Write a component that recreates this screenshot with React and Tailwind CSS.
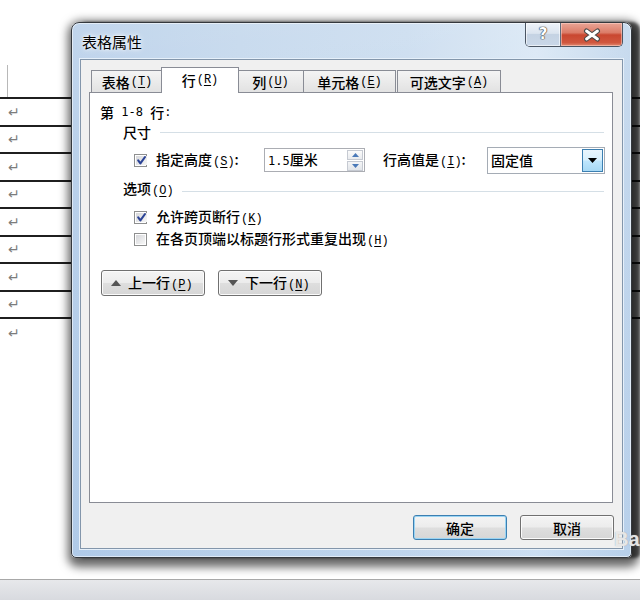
import React from "react";

function Mn({ k }) {
  return (
    <span className="font-['Liberation_Mono',monospace] text-[12px] ml-[1px]">
      (<span className="underline underline-offset-[2px]">{k}</span>)
    </span>
  );
}

function Lat({ children }) {
  return <span className="font-['DejaVu_Sans_Mono',monospace] text-[12px] whitespace-pre">{children}</span>;
}

function Ret() {
  return <span className="font-['DejaVu_Sans',sans-serif] text-[14px] leading-none text-[#7c7c7c]">↵</span>;
}

function Check({ checked }) {
  return (
    <span className="w-[13px] h-[13px] shrink-0 border border-[#8e8f8f] bg-white p-px flex">
      <span className="flex-1 bg-[linear-gradient(135deg,#d6d7da,#f7f7f7)] flex items-center justify-center">
        {checked && (
          <svg width="11" height="11" viewBox="0 0 11 11">
            <path d="M2.2 5.4 L4.4 8.4 L9 2" fill="none" stroke="#2b4396" strokeWidth="2.1" strokeLinecap="round" strokeLinejoin="round" />
          </svg>
        )}
      </span>
    </span>
  );
}

function Btn({ children, def, className }) {
  return (
    <div
      className={
        "h-[25px] rounded-[3px] border flex items-center bg-[linear-gradient(#f4f4f4_0%,#ececec_48%,#dedede_52%,#d6d6d6_100%)] " +
        (def
          ? "border-[#3c7fb1] shadow-[inset_0_0_0_1px_#9ad4f3] "
          : "border-[#707070] shadow-[inset_0_0_0_1px_#fbfbfb] ") +
        (className || "")
      }
    >
      {children}
    </div>
  );
}

export default function App() {
  const rows = Array.from({ length: 8 });
  return (
    <div className="relative w-[640px] h-[600px] overflow-hidden bg-white flex flex-col font-['Noto_Sans_CJK_SC',sans-serif] text-black">
      {/* background document */}
      <div className="flex-1 flex flex-col">
        <div className="h-[65px] shrink-0" />
        <div className="ml-[7px] w-px h-[32px] shrink-0 bg-[#b8b8b8]" />
        <div className="border-t-2 border-[#1f1f1f]">
          {rows.map((_, i) => (
            <div key={i} className="h-[27.5px] border-b-2 border-[#1f1f1f] flex items-center pl-[8px]">
              <Ret />
            </div>
          ))}
        </div>
        <div className="h-[28px] flex items-center pl-[8px]">
          <Ret />
        </div>
      </div>
      <div className="h-[21px] shrink-0 border-t border-[#a8a8a8] bg-[linear-gradient(#e7e8eb,#d8dadf)]" />

      {/* dialog window */}
      <div className="absolute left-[71px] top-[22px] w-[561px] h-[536px] rounded-t-[8px] rounded-b-[5px] border border-[#34383d] flex flex-col bg-[linear-gradient(180deg,rgba(255,255,255,0.12),rgba(255,255,255,0)_30%,rgba(110,160,220,0.12)),linear-gradient(90deg,#b9d0ea_0%,#c3d7ec_30%,#cadcef_60%,#d9e7f5_83%,#c1d6ec_100%)] shadow-[2px_4px_10px_5px_rgba(0,0,0,0.6),8px_0_3px_rgba(0,0,0,0.6),inset_0_0_0_1px_rgba(255,255,255,0.55)]">
        {/* title bar */}
        <div className="h-[36px] shrink-0 flex justify-between">
          <div className="self-center pl-[10px] pt-[1px] text-[15px] leading-[18px] [text-shadow:0_0_6px_#ffffff,0_0_3px_#ffffff]">
            表格属性
          </div>
          <div className="flex mr-[8px] h-[24px] rounded-b-[5px] overflow-hidden border border-t-0 border-[#4a5563]">
            <div className="w-[35px] h-full flex items-center justify-center border-r border-[#5d6b7c] bg-[linear-gradient(#eef3f9_0%,#dbe4ef_45%,#c5d3e3_50%,#c9d7e8_100%)] shadow-[inset_0_0_0_1px_rgba(255,255,255,0.6)]">
              <span className="font-['DejaVu_Sans',sans-serif] font-bold text-[15px] leading-none text-white [text-shadow:0_0_1px_#333,0_0_1px_#333,0_0_1px_#333]">
                ?
              </span>
            </div>
            <div className="w-[61px] h-full flex items-center justify-center bg-[linear-gradient(#e9a596_0%,#db7c68_42%,#c94730_52%,#d0573f_85%,#e08a72_100%)] shadow-[inset_0_0_0_1px_rgba(255,220,210,0.5)]">
              <svg width="18" height="14" viewBox="0 0 18 14">
                <path d="M3.5 3 L14.5 11 M14.5 3 L3.5 11" stroke="#4a4a4a" strokeWidth="5" strokeLinecap="round" />
                <path d="M3.5 3 L14.5 11 M14.5 3 L3.5 11" stroke="#ffffff" strokeWidth="2.8" strokeLinecap="round" />
              </svg>
            </div>
          </div>
        </div>

        {/* client area */}
        <div className="flex-1 mx-[8px] mb-[8px] border border-[#8396ab] shadow-[0_0_0_1px_#e6f0fa] bg-[#f0f0f0] flex flex-col text-[14px] leading-[18px] font-medium">
          {/* tabs */}
          <div className="mt-[7px] h-[25px] pl-[10px] flex items-end shrink-0">
            <div className="w-[72px] h-[22px] border border-b-0 border-[#898c95] bg-[linear-gradient(#f4f4f4,#e2e2e2)] flex items-center justify-center">
              表格<Mn k="T" />
            </div>
            <div className="relative z-10 -ml-[2px] w-[78px] h-[26px] -mb-px border border-b-0 border-[#898c95] bg-white flex items-center justify-center pb-[1px]">
              行<Mn k="R" />
            </div>
            <div className="-ml-[2px] w-[67px] h-[22px] border border-b-0 border-[#898c95] bg-[linear-gradient(#f4f4f4,#e2e2e2)] flex items-center justify-center">
              列<Mn k="U" />
            </div>
            <div className="-ml-px w-[93px] h-[22px] border border-b-0 border-[#898c95] bg-[linear-gradient(#f4f4f4,#e2e2e2)] flex items-center justify-center">
              单元格<Mn k="E" />
            </div>
            <div className="ml-px w-[104px] h-[22px] border border-b-0 border-[#898c95] bg-[linear-gradient(#f4f4f4,#e2e2e2)] flex items-center justify-center">
              可选文字<Mn k="A" />
            </div>
          </div>

          {/* tab panel */}
          <div className="ml-[8px] w-[524px] h-[411px] shrink-0 border border-[#898c95] bg-white flex flex-col">
            <div className="mt-[10px] h-[18px] pl-[10px] flex items-center">
              第<Lat> 1-8 </Lat>行<Lat>:</Lat>
            </div>

            <div className="mt-[2px] h-[18px] pl-[33px] flex items-center">
              <span>尺寸</span>
              <div className="flex-1 h-px ml-[9px] mr-[8px] bg-[#d5dfe6]" />
            </div>

            <div className="mt-[5px] h-[28px] pl-[44px] flex items-center">
              <Check checked />
              <span className="ml-[9px] w-[108px]">
                指定高度<Mn k="S" />:
              </span>
              <div className="w-[101px] h-[24px] border border-[#abadb3] bg-white flex items-center">
                <span className="pl-[3px] flex-1">
                  <Lat>1.5</Lat>厘米
                </span>
                <div className="w-[16px] h-[21px] mr-px flex flex-col gap-px">
                  <div className="flex-1 border border-[#c6cad2] bg-[linear-gradient(#fbfbfb,#e9ebee)] flex items-center justify-center">
                    <svg width="7" height="4" viewBox="0 0 7 4">
                      <path d="M0 4 L3.5 0 L7 4 Z" fill="#4a79b8" />
                    </svg>
                  </div>
                  <div className="flex-1 border border-[#c6cad2] bg-[linear-gradient(#f4f5f7,#e2e5e9)] flex items-center justify-center">
                    <svg width="7" height="4" viewBox="0 0 7 4">
                      <path d="M0 0 L3.5 4 L7 0 Z" fill="#4a79b8" />
                    </svg>
                  </div>
                </div>
              </div>
              <span className="ml-[18px] w-[104px]">
                行高值是<Mn k="I" />:
              </span>
              <div className="w-[118px] h-[27px] border border-[#a5acb5] bg-white flex items-center">
                <span className="pl-[3px] flex-1">固定值</span>
                <div className="w-[21px] h-[23px] mr-px border border-[#3c7fb1] bg-[linear-gradient(#eaf6fd_0%,#d9f0fc_48%,#bee6fd_52%,#a7d9f5_100%)] flex items-center justify-center">
                  <svg width="9" height="5" viewBox="0 0 9 5">
                    <path d="M0 0 L9 0 L4.5 5 Z" fill="#000" />
                  </svg>
                </div>
              </div>
            </div>

            <div className="mt-[6px] h-[18px] pl-[33px] flex items-center">
              <span>
                选项<Mn k="O" />
              </span>
              <div className="flex-1 h-px ml-[8px] mr-[8px] mt-[4px] bg-[#d5dfe6]" />
            </div>

            <div className="mt-[10px] h-[18px] pl-[44px] flex items-center">
              <Check checked />
              <span className="ml-[9px]">
                允许跨页断行<Mn k="K" />
              </span>
            </div>

            <div className="mt-[4px] h-[18px] pl-[44px] flex items-center">
              <Check />
              <span className="ml-[9px]">
                在各页顶端以标题行形式重复出现<Mn k="H" />
              </span>
            </div>

            <div className="mt-[22px] pl-[11px] flex gap-[13px]">
              <Btn className="w-[104px] h-[26px] pl-[9px] gap-[7px]">
                <svg width="10" height="6" viewBox="0 0 10 6">
                  <path d="M0 6 L5 0 L10 6 Z" fill="#555" />
                </svg>
                <span>
                  上一行<Mn k="P" />
                </span>
              </Btn>
              <Btn className="w-[104px] h-[26px] pl-[9px] gap-[7px]">
                <svg width="10" height="6" viewBox="0 0 10 6">
                  <path d="M0 0 L10 0 L5 6 Z" fill="#555" />
                </svg>
                <span>
                  下一行<Mn k="N" />
                </span>
              </Btn>
            </div>
          </div>

          {/* OK / Cancel */}
          <div className="mt-[12px] pr-[8px] flex justify-end gap-[13px]">
            <Btn def className="w-[94px] justify-center">
              确定
            </Btn>
            <Btn className="w-[94px] justify-center">取消</Btn>
          </div>
        </div>
      </div>

      <span className="absolute left-[614px] top-[529px] font-['Liberation_Sans',sans-serif] font-bold text-[20px] leading-none text-white/75 [text-shadow:0_0_1px_#9a9a9a]">
        Ba
      </span>
    </div>
  );
}
